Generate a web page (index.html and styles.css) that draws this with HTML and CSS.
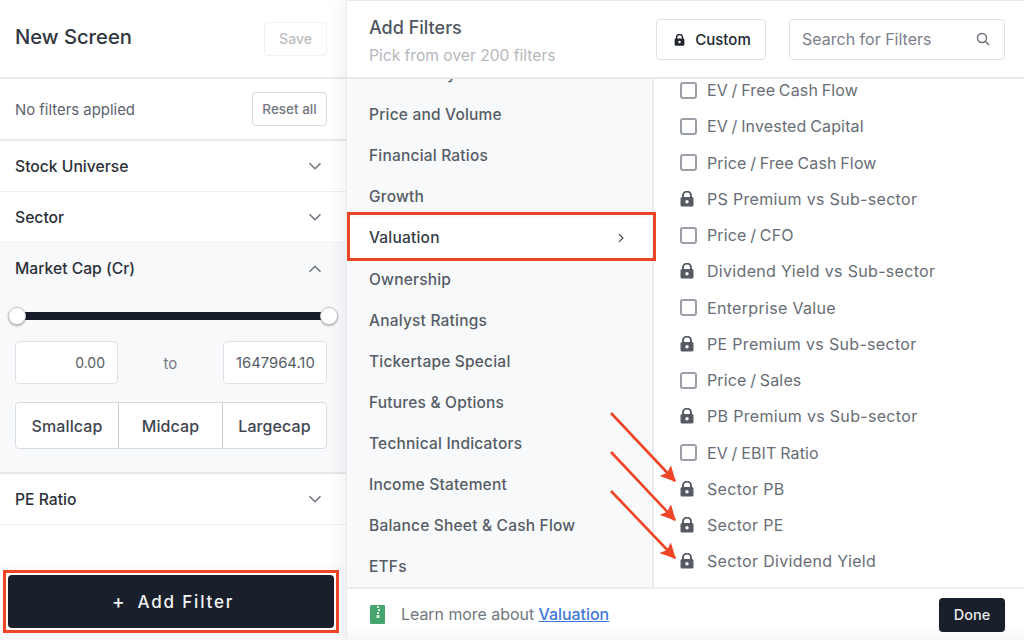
FILE: index.html
```html
<!DOCTYPE html>
<html lang="en">
<head>
<meta charset="utf-8">
<title>New Screen</title>
<link rel="stylesheet" href="styles.css">
</head>
<body>
<svg class="sprite" width="0" height="0" aria-hidden="true">
  <symbol id="lock" viewBox="0 0 14 16"><path d="M3 6.500V4.600a4 4 0 0 1 8 0v1.900" fill="none" stroke="currentColor" stroke-width="1.900"/><path fill-rule="evenodd" d="M2 6h10a1.500 1.500 0 0 1 1.500 1.500v6.500A1.500 1.500 0 0 1 12 15.500H2A1.500 1.500 0 0 1 .5 14V7.500A1.500 1.500 0 0 1 2 6Zm5 3a1.700 1.700 0 1 0 0 3.400A1.700 1.700 0 0 0 7 9Z" fill="currentColor"/></symbol>
  <symbol id="chev" viewBox="0 0 14 8"><path d="M1.500 1.200 7 6.700l5.500-5.500" fill="none" stroke="currentColor" stroke-width="1.600"/></symbol>
</svg>
<aside class="screen">
  <header class="screen-head"><h1>New Screen</h1><button class="save">Save</button></header>
  <div class="status"><span>No filters applied</span><button class="reset">Reset all</button></div>
  <div class="acc"><span>Stock Universe</span><svg class="chev"><use href="#chev"/></svg></div>
  <div class="acc"><span>Sector</span><svg class="chev"><use href="#chev"/></svg></div>
  <section class="cap">
    <div class="cap-title"><span>Market Cap (Cr)</span><svg class="chev up"><use href="#chev"/></svg></div>
    <div class="slider"><i class="knob"></i><i class="track"></i><i class="knob"></i></div>
    <div class="range"><div class="num">0.00</div><span class="to">to</span><div class="num clip"><span>1647964.10</span></div></div>
    <div class="seg"><div>Smallcap</div><div>Midcap</div><div>Largecap</div></div>
  </section>
  <div class="acc"><span>PE Ratio</span><svg class="chev"><use href="#chev"/></svg></div>
  <div class="fill"></div>
  <footer class="add-wrap"><button class="add"><span class="plus">+</span>Add Filter</button></footer>
</aside>
<main class="modal">
  <header class="modal-head">
    <div class="titles"><h2>Add Filters</h2><p>Pick from over 200 filters</p></div>
    <button class="custom"><svg class="lock-sm"><use href="#lock"/></svg>Custom</button>
    <div class="search"><span>Search for Filters</span><svg class="mag" viewBox="0 0 14 14"><circle cx="6" cy="6" r="4.500" fill="none" stroke="currentColor" stroke-width="1.500"/><path d="m9.500 9.500 3.500 3.500" stroke="currentColor" stroke-width="1.500"/></svg></div>
  </header>
  <div class="body">
    <nav class="nav"><ul>
      <li>Profitability</li><li>Price and Volume</li><li>Financial Ratios</li><li>Growth</li>
      <li class="active">Valuation<svg class="chev right"><use href="#chev"/></svg></li>
      <li>Ownership</li><li>Analyst Ratings</li><li>Tickertape Special</li><li>Futures &amp; Options</li><li>Technical Indicators</li><li>Income Statement</li><li>Balance Sheet &amp; Cash Flow</li><li>ETFs</li>
    </ul></nav>
    <ul class="list">
      <li class="ratio"><i class="box"></i>EV / Free Cash Flow</li>
      <li class="ratio"><i class="box"></i>EV / Invested Capital</li>
      <li class="ratio"><i class="box"></i>Price / Free Cash Flow</li>
      <li><svg class="lock"><use href="#lock"/></svg>PS Premium vs Sub-sector</li>
      <li class="ratio"><i class="box"></i>Price / CFO</li>
      <li><svg class="lock"><use href="#lock"/></svg>Dividend Yield vs Sub-sector</li>
      <li><i class="box"></i>Enterprise Value</li>
      <li><svg class="lock"><use href="#lock"/></svg>PE Premium vs Sub-sector</li>
      <li class="ratio"><i class="box"></i>Price / Sales</li>
      <li><svg class="lock"><use href="#lock"/></svg>PB Premium vs Sub-sector</li>
      <li class="ratio"><i class="box"></i>EV / EBIT Ratio</li>
      <li><svg class="lock"><use href="#lock"/></svg>Sector PB</li>
      <li><svg class="lock"><use href="#lock"/></svg>Sector PE</li>
      <li><svg class="lock"><use href="#lock"/></svg>Sector Dividend Yield</li>
    </ul>
  </div>
  <footer class="modal-foot">
    <svg class="book" viewBox="0 0 15 19"><path d="M1.500 0H14a1 1 0 0 1 1 1v17a1 1 0 0 1-1 1H1.500A1.500 1.500 0 0 1 0 17.500v-16A1.500 1.500 0 0 1 1.500 0Z" fill="#46a56f"/><path d="M7 1h2v2H7zM8 4h2v2H8zM7 7h2v2H7zM6.500 10h3v3h-3z" fill="#d5ecdd"/></svg>
    <span class="learn">Learn more about <a href="#">Valuation</a></span>
    <button class="done">Done</button>
  </footer>
</main>
<svg class="arrows" viewBox="0 0 1024 640" aria-hidden="true">
  <defs><marker id="head" markerWidth="6" markerHeight="6" refX="5.500" refY="3" orient="auto"><path d="M0 0 6 3 0 6 1.200 3Z" fill="#ee4526"/></marker></defs>
  <path class="arrow" d="M611 413 675 481" marker-end="url(#head)"/>
  <path class="arrow" d="M611 452 675 520" marker-end="url(#head)"/>
  <path class="arrow" d="M611 491 675 558" marker-end="url(#head)"/>
</svg>
</body>
</html>
```
FILE: styles.css
```css
* { box-sizing: border-box; }
html, body { margin: 0; height: 100%; }
body {
  width: 1024px; height: 640px; overflow: hidden; display: flex;
  font-family: Inter, "Liberation Sans", sans-serif; color: #2e343e; background: #fff;
  -webkit-font-smoothing: antialiased;
}
button { font: inherit; background: #fff; cursor: pointer; }
ul { list-style: none; margin: 0; padding: 0; }
h1, h2, p { margin: 0; }
.sprite { position: absolute; }

/* left panel */
.screen { width: 346px; height: 640px; display: flex; flex-direction: column; flex: none; }
.screen-head {
  height: 79px; display: flex; align-items: center; justify-content: space-between;
  padding: 0 19px 0 15px; border-bottom: 2px solid #e9eaec;
}
.screen-head h1 { font-size: 20.200px; font-weight: 500; color: #2f3641; position: relative; top: -2px; }
.save {
  width: 63px; height: 34px; border: 1px solid #f0f1f3; border-radius: 4px;
  color: #b9bcc2; font-size: 14px; font-weight: 500; padding: 0;
}
.status {
  height: 62px; display: flex; align-items: center; justify-content: space-between;
  padding: 0 19px 0 15px; border-bottom: 2px solid #e9eaec; font-size: 14.900px; color: #5d636d;
}
.status span { padding-top: 2px; }
.reset {
  width: 75px; height: 34px; border: 1px solid #d6d9de; border-radius: 4px;
  font-size: 13.500px; font-weight: 500; color: #737881; padding: 0;
}
.acc {
  height: 51px; flex: none; display: flex; align-items: center; justify-content: space-between;
  padding: 0 24px 0 15px; border-bottom: 1px solid #eceef0; font-size: 15.700px; font-weight: 500; color: #2b3039;
}
.chev { width: 14px; height: 8px; color: #70757e; flex: none; }
.chev.up { transform: rotate(180deg); }
.chev.right { transform: rotate(-90deg); color: #3a3f48; width: 10px; height: 6px; }
.cap { height: 231px; flex: none; background: #f8f9fb; border-bottom: 2px solid #e6e8eb; padding: 0 19px 0 15px; }
.cap-title {
  height: 51px; display: flex; align-items: center; justify-content: space-between;
  padding-right: 5px; font-size: 15.700px; font-weight: 500; color: #2b3039;
}
.slider { display: flex; align-items: center; margin: 13px -11px 0 -7px; height: 18px; }
.track { flex: 1; height: 8px; background: #171e29; margin: 0 -1px; }
.knob {
  width: 18px; height: 18px; border-radius: 50%; background: #fff; border: 1px solid #c5c7cb;
  box-shadow: 0 1px 2px rgba(0,0,0,.35); position: relative; z-index: 1; flex: none;
}
.range { display: flex; align-items: center; justify-content: space-between; margin-top: 16px; }
.num {
  width: 103px; height: 43px; background: #fff; border: 1px solid #dfe1e5; border-radius: 4px;
  display: flex; align-items: center; justify-content: flex-end; padding: 0 12px;
  font-size: 14px; color: #555b65;
}
.num.clip { width: 104px; padding: 0 11px 0 12px; justify-content: flex-start; overflow: hidden; font-size: 14.800px; }
.num.clip span { display: block; width: 80px; overflow: hidden; white-space: nowrap; flex: none; }
.to { font-size: 15px; color: #777c85; position: relative; top: 1px; }
.seg {
  display: grid; grid-template-columns: 102px 104px 1fr; height: 47px; margin-top: 18px; background: #fff;
  border: 1px solid #d9dce0; border-radius: 4px; font-size: 16px; letter-spacing: .1px; font-weight: 500; color: #3f454f;
}
.seg div { display: flex; align-items: center; justify-content: center; }
.seg div + div { border-left: 1px solid #c9ccd2; }
.fill { flex: 1; }
.add-wrap { height: 76px; flex: none; background: #fbfbfc; padding: 6px 7px 7px 3px; }
.add {
  width: 336px; height: 63px; border: 3px solid #ee4526; background: #fff; padding: 2px 0 2px 4px;
  position: relative; isolation: isolate; color: #f3f4f5; font-size: 17px; font-weight: 500; letter-spacing: 1.800px;
}
.add::before { content: ""; position: absolute; inset: 2px; background: #19202b; border-radius: 4px; z-index: -1; }
.plus { margin-right: 13px; font-size: 19px; letter-spacing: 0; }

/* modal */
.modal { flex: 1; height: 640px; display: flex; flex-direction: column; box-shadow: -6px 0 12px rgba(20,25,35,.05); border-left: 1px solid #ecedef; position: relative; }
.modal-head {
  height: 79px; flex: none; display: flex; align-items: center; padding: 0 19px 0 22px;
  border-bottom: 2px solid #e7e8ea; border-top: 1px solid #e8e9eb;
  background: #fff; position: relative; z-index: 1;
}
.titles { flex: 1; padding-top: 3px; }
.titles h2 { font-size: 18px; font-weight: 500; color: #50565f; }
.titles p { font-size: 15.600px; color: #b4b7bc; margin-top: 8px; }
.custom {
  width: 110px; height: 41px; border: 1px solid #dfe1e4; border-radius: 4px; padding: 1px 0 0 3px;
  display: flex; align-items: center; justify-content: center; gap: 10px;
  font-size: 15px; font-weight: 500; color: #20252e;
}
.lock-sm { width: 11px; height: 12px; color: #20252e; }
.search {
  width: 216px; height: 41px; margin-left: 23px; border: 1px solid #dfe1e4; border-radius: 4px;
  display: flex; align-items: center; justify-content: space-between; padding: 0 14px 0 12px;
  font-size: 16px; color: #7b8088;
}
.mag { width: 14px; height: 14px; color: #6b7079; }
.body { flex: 1; min-height: 0; display: flex; }
.nav { width: 307px; flex: none; background: #f8f9fb; border-right: 2px solid #ebecee; }
.nav ul { margin-top: -26px; }
.nav li {
  height: 41.100px; display: flex; align-items: center; justify-content: space-between;
  padding: 0 26px 0 22px; font-size: 15.500px; letter-spacing: .2px; font-weight: 500; color: #565c65;
}
.nav li.active { position: relative; background: #fff; color: #363c46; }
.nav li.active::after {
  content: ""; position: absolute; left: 0; right: -4px; top: -5px; bottom: -3px; border: 3px solid #ee4526;
}
.list { flex: 1; padding: 0 0 0 26px; margin-top: -7px; }
.list li {
  height: 36.250px; display: flex; align-items: center; gap: 10px;
  font-size: 16px; color: #686d75; letter-spacing: .32px;
}
.list li.ratio { letter-spacing: .15px; word-spacing: -1px; }
.box { width: 17px; height: 17px; border: 2px solid #9a9ea5; border-radius: 3px; background: #fff; flex: none; }
.lock { width: 14px; height: 16px; color: #555a63; flex: none; margin: 0 3px 0 0; }
.modal-foot {
  height: 53px; flex: none; display: flex; align-items: center; padding: 0 19px 0 23px; gap: 16px;
  border-top: 2px solid #ecedef; background: linear-gradient(#fff 70%, #f6f6f7);
}
.book { width: 15px; height: 19px; flex: none; }
.learn { flex: 1; font-size: 15.900px; color: #71767e; }
.learn a { color: #3d78d8; font-weight: 500; }
.done {
  width: 66px; height: 34px; border: 0; border-radius: 4px; background: #19202b;
  color: #e9eaec; font-size: 14.500px; font-weight: 500; padding: 0;
}
.arrows { position: absolute; left: 0; top: 0; width: 1024px; height: 640px; pointer-events: none; }
.arrow { stroke: #ee4526; stroke-width: 2.600; fill: none; }
```
